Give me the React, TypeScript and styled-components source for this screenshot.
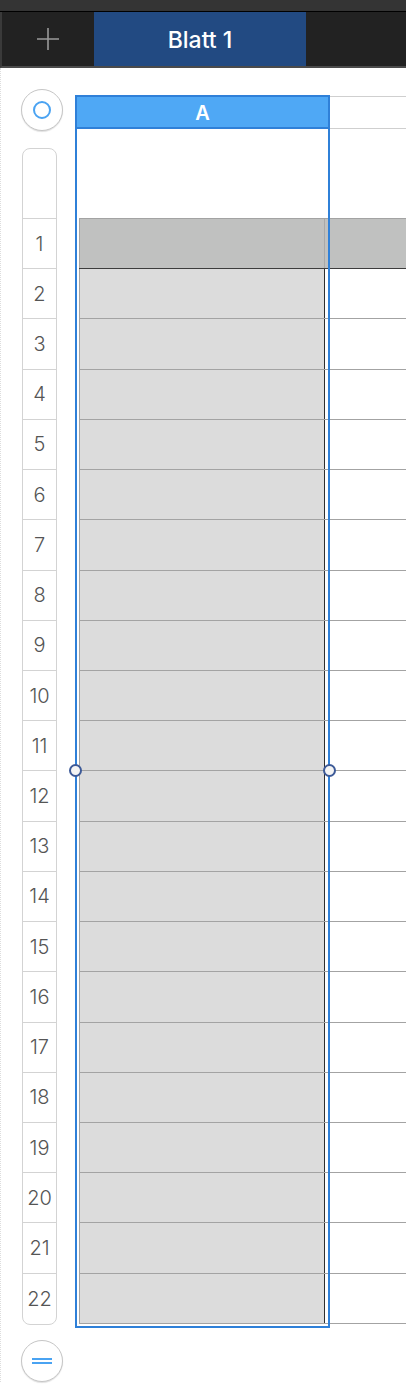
import { createGlobalStyle, styled } from "styled-components";

const ROW_H = 50.23;
const ROW_COUNT = 22;

const GlobalStyle = createGlobalStyle`
  html, body {
    margin: 0;
    padding: 0;
    background: #ffffff;
    font-family: Inter, "Liberation Sans", Arial, sans-serif;
  }
`;

const Page = styled.div`
  width: 406px;
  min-height: 1400px;
  overflow: hidden;
  background: #ffffff;
`;

const TopStrip = styled.div`
  height: 11px;
  background: #343434;
  border-bottom: 1px solid #000000;
`;

const TabBar = styled.div`
  display: flex;
  height: 54px;
  background: #222222;
  border-left: 2px solid #3a3a3a;
  border-bottom: 2px solid #4b4b4b;
`;

const AddTab = styled.div`
  width: 92px;
  display: flex;
  align-items: center;
  justify-content: center;
  color: #9a9a9a;
`;

const Tab = styled.div`
  width: 212px;
  display: flex;
  align-items: center;
  justify-content: center;
  background: #224a82;
  color: #ffffff;
  font-size: 23px;
  font-weight: 500;
  padding-top: 1px;
`;

const Body = styled.div`
  display: flex;
  border-left: 1px dotted #dddddd;
`;

const Rail = styled.div`
  width: 74px;
  flex-shrink: 0;
  display: flex;
  flex-direction: column;
  padding-top: 21px;
`;

const RoundButton = styled.div<{ $gap: number }>`
  width: 40px;
  height: 40px;
  margin-left: 20px;
  margin-top: ${(p) => p.$gap}px;
  border-radius: 50%;
  border: 1px solid #c6c6c6;
  box-shadow: 0 1px 1px rgba(0, 0, 0, 0.12);
  display: flex;
  align-items: center;
  justify-content: center;
  background: #ffffff;
`;

const RingIcon = styled.div`
  width: 14px;
  height: 14px;
  border-radius: 50%;
  border: 2px solid #4aa3f2;
`;

const EqualsIcon = styled.div`
  width: 20px;
  height: 2px;
  border-top: 2px solid #4aa3f2;
  border-bottom: 2px solid #4aa3f2;
`;

const RowHeaders = styled.div`
  width: 33px;
  margin-left: 21px;
  margin-top: 17px;
  border: 1px solid #d3d3d3;
  border-radius: 8px;
  display: flex;
  flex-direction: column;
  overflow: hidden;
`;

const RowHeaderTop = styled.div`
  height: 69px;
  border-bottom: 1px solid #d3d3d3;
`;

const RowHeader = styled.div<{ $last?: boolean }>`
  height: ${ROW_H}px;
  box-sizing: border-box;
  border-bottom: ${(p) => (p.$last ? "none" : "1px solid #d3d3d3")};
  display: flex;
  align-items: center;
  justify-content: center;
  color: #555555;
  font-size: 20px;
  font-weight: 300;
`;

const Table = styled.div`
  position: relative;
  flex: 1;
  margin-top: 27px;
`;

const ColumnHeaderRow = styled.div`
  display: flex;
  height: 35px;
`;

const ColumnHeaderSpace = styled.div`
  width: 255px;
`;

const ColumnHeaderRest = styled.div`
  flex: 1;
  margin-top: 1px;
  height: 33px;
  border-top: 1px solid #cfcfcf;
  border-bottom: 1px solid #cfcfcf;
  box-sizing: border-box;
`;

const TitleSpace = styled.div`
  height: 88px;
`;

const Rows = styled.div`
  margin-left: 4px;
  border-top: 1px solid #a3a3a3;
`;

const Row = styled.div<{ $header?: boolean }>`
  display: flex;
  height: ${ROW_H}px;
  box-sizing: border-box;
  border-bottom: 1px solid ${(p) => (p.$header ? "#3d3d3d" : "#a3a3a3")};
  background: ${(p) => (p.$header ? "#c0c1c0" : "transparent")};
`;

const CellA = styled.div<{ $header?: boolean }>`
  width: 246px;
  box-sizing: border-box;
  border-left: 1px solid #a3a3a3;
  border-right: 1px solid ${(p) => (p.$header ? "#a8a8a8" : "#2e2e2e")};
  background: ${(p) => (p.$header ? "#c0c1c0" : "#dcdcdc")};
`;

const CellRest = styled.div`
  flex: 1;
`;

const Selection = styled.div`
  position: absolute;
  left: 0;
  top: 0;
  width: 255px;
  height: 1233px;
  box-sizing: border-box;
  border: 2px solid #2f80d8;
  pointer-events: none;
`;

const SelectionHeader = styled.div`
  height: 32px;
  background: #4fa8f5;
  border-bottom: 2px solid #2f80d8;
  display: flex;
  align-items: center;
  justify-content: center;
  color: #ffffff;
  font-size: 20px;
  font-weight: 600;
  padding-top: 1px;
  box-sizing: border-box;
`;

const Handle = styled.div<{ $left: number }>`
  position: absolute;
  top: 669px;
  left: ${(p) => p.$left}px;
  width: 9px;
  height: 9px;
  border-radius: 50%;
  background: #f4f4f4;
  border: 2px solid #3d5a98;
`;

function PlusIcon() {
  return (
    <svg width="24" height="24" viewBox="0 0 24 24">
      <path d="M12 1V23M1 12H23" stroke="#9a9a9a" strokeWidth="1.6" />
    </svg>
  );
}

export default function App() {
  const rows = Array.from({ length: ROW_COUNT }, (_, i) => i + 1);
  return (
    <Page>
      <GlobalStyle />
      <TopStrip />
      <TabBar>
        <AddTab>
          <PlusIcon />
        </AddTab>
        <Tab>Blatt 1</Tab>
      </TabBar>
      <Body>
        <Rail>
          <RoundButton $gap={0}>
            <RingIcon />
          </RoundButton>
          <RowHeaders>
            <RowHeaderTop />
            {rows.map((n) => (
              <RowHeader key={n} $last={n === ROW_COUNT}>
                {n}
              </RowHeader>
            ))}
          </RowHeaders>
          <RoundButton $gap={15}>
            <EqualsIcon />
          </RoundButton>
        </Rail>
        <Table>
          <ColumnHeaderRow>
            <ColumnHeaderSpace />
            <ColumnHeaderRest />
          </ColumnHeaderRow>
          <TitleSpace />
          <Rows>
            {rows.map((n) => (
              <Row key={n} $header={n === 1}>
                <CellA $header={n === 1} />
                <CellRest />
              </Row>
            ))}
          </Rows>
          <Selection>
            <SelectionHeader>A</SelectionHeader>
          </Selection>
          <Handle $left={-6} />
          <Handle $left={248} />
        </Table>
      </Body>
    </Page>
  );
}
